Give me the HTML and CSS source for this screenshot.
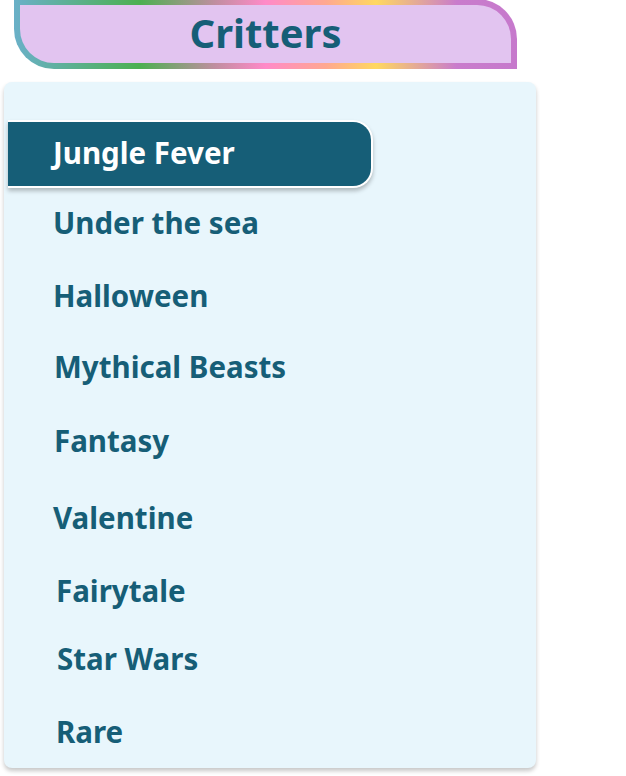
FILE: index.html
```html
<!DOCTYPE html>
<html>
<head>
<meta charset="utf-8">
<link rel="stylesheet" href="styles.css">
</head>
<body>
<div class="header"><h1 class="title">Critters</h1></div>
<div class="card">
  <ul class="menu">
    <li class="item active">Jungle Fever</li>
    <li class="item">Under the sea</li>
    <li class="item">Halloween</li>
    <li class="item">Mythical Beasts</li>
    <li class="item">Fantasy</li>
    <li class="item">Valentine</li>
    <li class="item">Fairytale</li>
    <li class="item">Star Wars</li>
    <li class="item">Rare</li>
  </ul>
</div>
</body>
</html>
```
FILE: styles.css
```css
html, body {
  margin: 0;
  padding: 0;
  background: #ffffff;
}
body {
  width: 626px;
  height: 776px;
  overflow: hidden;
  font-family: "Noto Sans", "Open Sans", sans-serif;
  color: #165e77;
}
.header {
  box-sizing: border-box;
  margin: -1px 0 0 14px;
  width: 503px;
  height: 70px;
  border: 6px solid transparent;
  border-radius: 0 40px 0 40px;
  background:
    linear-gradient(#e2c4f0, #e2c4f0) padding-box,
    linear-gradient(90deg, #6ab0c8 0%, #4cb050 25%, #c08ea0 40%, #ff8ac8 50%, #ffa890 62%, #ffd860 72%, #c97ccc 88%, #c679cc 100%) border-box;
  display: flex;
  align-items: center;
  justify-content: center;
}
.title {
  margin: -3px 0 0 0;
  font-size: 40px;
  font-weight: 700;
  line-height: 1;
  color: #165e77;
}
.card {
  box-sizing: border-box;
  margin: 13px 0 0 4px;
  width: 532px;
  height: 686px;
  background: #e8f6fc;
  border-radius: 8px;
  box-shadow: 0 3px 4px rgba(0, 0, 0, 0.22);
  padding-top: 38px;
}
.menu {
  list-style: none;
  margin: 0;
  padding: 0;
  display: flex;
  flex-direction: column;
}
.item {
  box-sizing: border-box;
  height: 68px;
  display: flex;
  align-items: center;
  padding-left: 49px;
  padding-top: 1px;
  padding-bottom: 1px;
  font-size: 29.5px;
  font-weight: 700;
  color: #165e77;
}
.item.active {
  margin-left: 4px;
  width: 365px;
  padding-left: 45px;
  padding-top: 0;
  padding-bottom: 3px;
  background: #165e77;
  color: #ffffff;
  border: 2px solid #ffffff;
  border-left: none;
  border-radius: 0 20px 20px 0;
  box-shadow: 0 3px 4px rgba(0, 0, 0, 0.25);
}
.item:nth-child(3) { margin-top: 5px; }
.item:nth-child(4) { margin-top: 3px; padding-left: 50px; }
.item:nth-child(5) { margin-top: 6px; padding-left: 50px; }
.item:nth-child(6) { margin-top: 9px; }
.item:nth-child(7) { margin-top: 5px; padding-left: 52px; }
.item:nth-child(8) { margin-top: 0; padding-left: 53px; }
.item:nth-child(9) { margin-top: 5px; padding-left: 52px; }
```
